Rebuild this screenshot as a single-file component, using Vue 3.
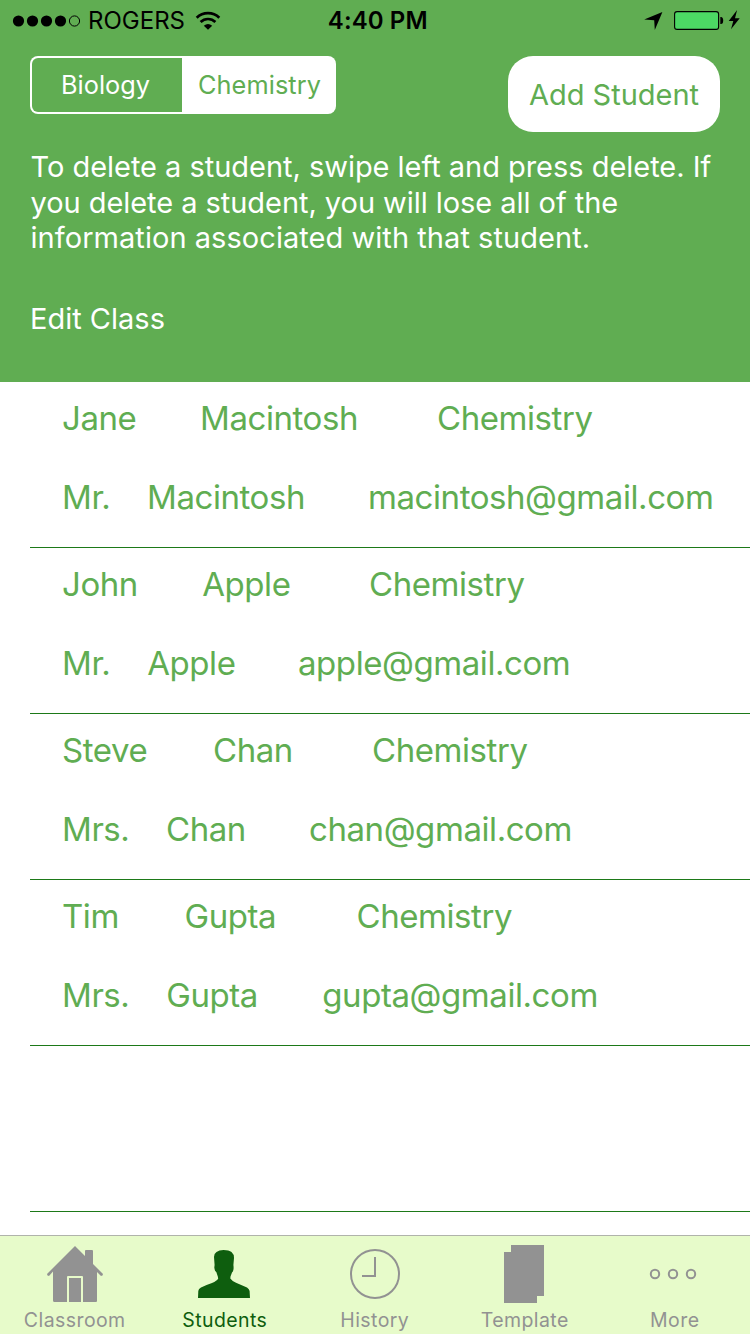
<script setup>
const students = [
  { first: 'Jane', last: 'Macintosh', course: 'Chemistry', title: 'Mr.', parent: 'Macintosh', email: 'macintosh@gmail.com', top: [138, 237], bottom: [85, 221] },
  { first: 'John', last: 'Apple', course: 'Chemistry', title: 'Mr.', parent: 'Apple', email: 'apple@gmail.com', top: [140.2, 166.8], bottom: [85.2, 150.8] },
  { first: 'Steve', last: 'Chan', course: 'Chemistry', title: 'Mrs.', parent: 'Chan', email: 'chan@gmail.com', top: [151, 159], bottom: [104, 143] },
  { first: 'Tim', last: 'Gupta', course: 'Chemistry', title: 'Mrs.', parent: 'Gupta', email: 'gupta@gmail.com', top: [122.5, 172], bottom: [104.3, 156] },
]
const columns = (widths) => ({ gridTemplateColumns: widths.map((w) => w + 'px').join(' ') + ' auto' })
</script>

<template>
  <div class="screen">
    <header class="header">
      <div class="status">
        <div class="carrier">
          <svg width="70" height="14" viewBox="0 0 70 14">
            <circle cx="6.5" cy="7" r="5.6" /><circle cx="20.5" cy="7" r="5.6" />
            <circle cx="34.5" cy="7" r="5.6" /><circle cx="48.5" cy="7" r="5.6" />
            <circle cx="62.5" cy="7" r="5.1" fill="none" stroke="#000" />
          </svg>
          <span class="operator">ROGERS</span>
          <svg class="wifi" width="26" height="20" viewBox="0 0 26 20">
            <path d="M1.7 6.8A16.2 16.2 0 0 1 24.3 6.8" fill="none" stroke="#000" stroke-width="2.7" />
            <path d="M5.6 11A10.6 10.6 0 0 1 20.4 11" fill="none" stroke="#000" stroke-width="2.7" />
            <path d="M13 18.7L8.8 14.7Q13 11.2 17.2 14.7Z" />
          </svg>
        </div>
        <span class="time">4:40 PM</span>
        <div class="power">
          <svg width="98" height="22" viewBox="0 0 98 22">
            <path d="M.2 9.6L18.4 2L10.8 20L10.2 10.3Z" />
            <rect x="30.6" y="1.6" width="44" height="17.8" rx="2.5" fill="#4cd964" stroke="#000" stroke-width="1.1" />
            <path d="M76.3 7H77Q79.2 7 79.2 10.5Q79.2 14 77 14H76.3Z" />
            <path d="M93.1 0L84.7 11H89.3L87 19.2L95.700 8.2H91Z" />
          </svg>
        </div>
      </div>
      <div class="controls">
        <div class="segments">
          <div class="segment"><span class="biology">Biology</span></div>
          <div class="segment selected"><span class="chemistry">Chemistry</span></div>
        </div>
        <button class="add">Add Student</button>
      </div>
      <p class="help">
        <span class="l1">To delete a student, swipe left and press delete. If</span><br />
        <span class="l2">you delete a student, you will lose all of the</span><br />
        <span class="l3">information associated with that student.</span>
      </p>
      <div class="edit"><span>Edit Class</span></div>
    </header>

    <main class="list">
      <div v-for="s in students" :key="s.email" class="row">
        <div class="line" :style="columns(s.top)"><span>{{ s.first }}</span><span>{{ s.last }}</span><span>{{ s.course }}</span></div>
        <div class="line bottom" :style="columns(s.bottom)"><span>{{ s.title }}</span><span>{{ s.parent }}</span><span>{{ s.email }}</span></div>
      </div>
      <div class="row"></div>
    </main>

    <nav class="tabs">
      <div class="tab">
        <svg width="60" height="60" viewBox="45 1244 60 60">
          <path d="M75 1246L85 1256V1250.8Q85 1250 86 1250H92Q93 1250 93 1251V1264L103 1274Q103 1276 101 1276L97 1272V1301Q97 1302 96 1302H83V1277Q83 1276 82 1276H68Q67 1276 67 1277V1302H54.500Q53 1302 53 1300.500V1271.500L49 1276Q47 1276 47 1274Z" />
          <rect x="69" y="1278" width="12" height="24" />
        </svg>
        <span>Classroom</span>
      </div>
      <div class="tab active">
        <svg width="60" height="60" viewBox="195 1244 60 60">
          <path d="M198 1298L198.300 1291Q198.500 1288.800 201 1287.500Q206 1285 212 1283Q217 1280.800 218.200 1278.500L217.800 1276.500L216.300 1272Q214.800 1271.500 214.300 1267.500L214.600 1265L214 1257Q214 1253.500 216.500 1252Q219 1250 223.500 1250Q229 1250 231.500 1252Q234 1254 234 1258L233.400 1265Q234.200 1271 232 1272.500L230.500 1276.500L230.300 1278.500Q232 1281 236 1282.800L247 1287.500Q249.300 1289 249.600 1291L250 1298Z" />
        </svg>
        <span>Students</span>
      </div>
      <div class="tab">
        <svg width="60" height="60" viewBox="345 1244 60 60" fill="none" stroke="#929292" stroke-width="2">
          <circle cx="375" cy="1274" r="24" /><path d="M362 1276H375V1257" />
        </svg>
        <span>History</span>
      </div>
      <div class="tab">
        <svg width="60" height="60" viewBox="495 1244 60 60">
          <path d="M512 1245H544V1296H537V1303H504V1252H511V1245Z" />
        </svg>
        <span>Template</span>
      </div>
      <div class="tab">
        <svg width="60" height="60" viewBox="645 1244 60 60" fill="none" stroke="#929292" stroke-width="2">
          <circle cx="655" cy="1274" r="4.200" /><circle cx="673" cy="1274" r="4.200" /><circle cx="691" cy="1274" r="4.200" />
        </svg>
        <span>More</span>
      </div>
    </nav>
  </div>
</template>

<style>
body { margin: 0; }
</style>

<style scoped>
* { box-sizing: border-box; }
.screen { width: 750px; height: 1334px; display: flex; flex-direction: column; overflow: hidden; background: #fff; font-family: Inter, "Liberation Sans", sans-serif; }
.header { height: 382px; flex: none; background: #60ad52; color: #fff; }
.status { height: 40px; display: grid; grid-template-columns: 1fr auto 1fr; align-items: center; color: #000; font-size: 24px; line-height: 42px; padding: 0 8px 0 12px; }
.carrier { display: flex; align-items: center; }
.operator { margin-left: 6px; }
.wifi { margin-left: 10px; }
.time { font-weight: 600; letter-spacing: 0.1px; padding-left: 1.500px; }
.power { display: flex; justify-content: flex-end; }
.status svg { display: block; }
.controls { display: flex; justify-content: space-between; align-items: flex-start; padding: 16px 30px 0; height: 109px; }
.segments { width: 306px; height: 58px; display: flex; padding: 2px; border-radius: 8px; background: #fff; }
.segment { width: 150px; display: flex; justify-content: center; align-items: center; border-radius: 6px 0 0 6px; background: #60ad52; font-size: 25.300px; line-height: 54px; }
.selected { width: 152px; flex: none; background: none; color: #60ad52; }
.biology { margin-right: 3px; }
.chemistry { margin-left: 3px; letter-spacing: 0.1px; }
.add { width: 212px; height: 76px; padding: 2px 0 0; border: 0; border-radius: 25px; background: #fff; color: #60ad52; font: 400 29px/74px Inter, sans-serif; white-space: nowrap; }
.help { margin: 0; padding-left: 30.500px; height: 152px; font-size: 29px; line-height: 35.500px; white-space: nowrap; }
.l1 { letter-spacing: -0.03px; }
.l2 { letter-spacing: -0.05px; }
.l3 { letter-spacing: 0.05px; }
.edit { padding-left: 30px; font-size: 29px; line-height: 36px; }
.list { height: 853px; flex: none; color: #60ad52; }
.row { height: 166px; margin-left: 30px; padding: 16px 0 0 32px; border-bottom: 1px solid #1d7918; }
.line { display: grid; font-size: 33px; line-height: 40px; letter-spacing: -0.43px; white-space: nowrap; }
.bottom { margin-top: 39px; }
.tabs { height: 99px; flex: none; display: flex; border-top: 1px solid #b0b3ab; background: #e7fbca; color: #929292; }
.tab { width: 150px; padding-top: 8px; display: flex; flex-direction: column; align-items: center; font-size: 19.500px; line-height: 24px; letter-spacing: 0.42px; }
.tab svg { display: block; fill: #929292; }
.tab svg[fill="none"] { fill: none; }
.tab span { margin: 4px 0.500px 0 0; }
.active { color: #0e5e0e; }
.active svg { fill: #0e5e0e; }
</style>
